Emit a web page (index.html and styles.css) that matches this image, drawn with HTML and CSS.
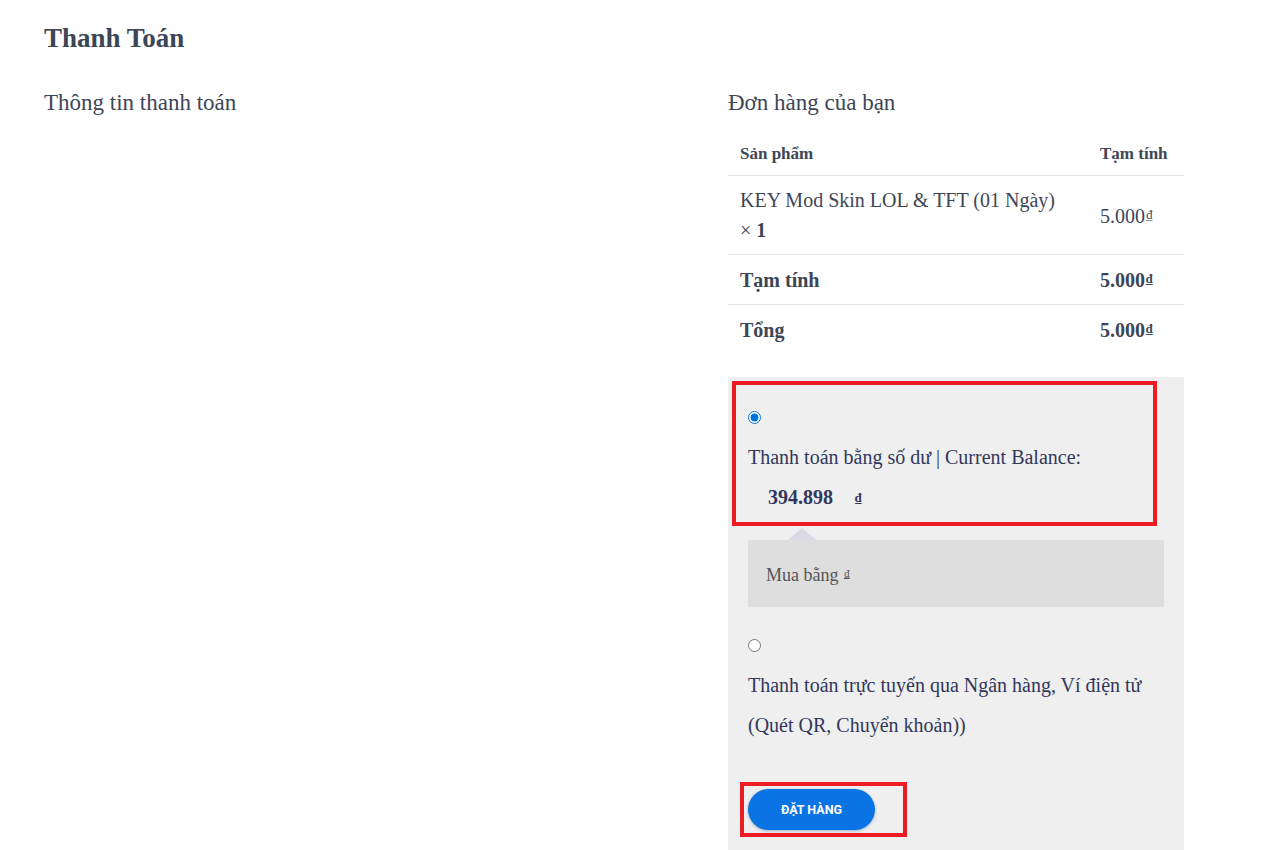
FILE: index.html
```html
<!DOCTYPE html>
<html lang="vi">
<head>
  <meta charset="UTF-8">
  <meta name="viewport" content="width=device-width, initial-scale=1.0">
  <title>Thanh Toán</title>
  <link rel="stylesheet" href="styles.css">
</head>
<body>
  <div class="checkout">
    <h1 class="page-title">Thanh Toán</h1>

    <div class="columns">
      <div class="billing">
        <h3 class="section-title">Thông tin thanh toán</h3>
      </div>

      <div class="order">
        <h3 class="section-title">Đơn hàng của bạn</h3>

        <table class="order-table">
          <thead>
            <tr>
              <th>Sản phẩm</th>
              <th class="col-total">Tạm tính</th>
            </tr>
          </thead>
          <tbody>
            <tr class="item-row">
              <td>KEY Mod Skin LOL &amp; TFT (01 Ngày)<br>× <strong>1</strong></td>
              <td>5.000<span class="dong">₫</span></td>
            </tr>
          </tbody>
          <tfoot>
            <tr>
              <th>Tạm tính</th>
              <td><strong>5.000<span class="dong">₫</span></strong></td>
            </tr>
            <tr>
              <th>Tổng</th>
              <td><strong>5.000<span class="dong">₫</span></strong></td>
            </tr>
          </tfoot>
        </table>

        <div class="payment">
          <ul class="methods">
            <li class="method method-balance">
              <div class="method-radio"><input type="radio" name="pay" checked></div>
              <div class="method-label">Thanh toán bằng số dư | Current Balance:</div>
              <div class="balance"><strong>394.898</strong><span class="balance-dong">₫</span></div>
            </li>
            <li class="method-box">
              Mua bằng <span class="dong">₫</span>
            </li>
            <li class="method method-bank">
              <div class="method-radio"><input type="radio" name="pay"></div>
              <div class="method-label">Thanh toán trực tuyến qua Ngân hàng, Ví điện tử<br>(Quét QR, Chuyển khoản))</div>
            </li>
          </ul>

          <div class="place-order">
            <button class="order-button" type="button">ĐẶT HÀNG</button>
          </div>
        </div>
      </div>
    </div>
  </div>
</body>
</html>
```

FILE: styles.css
```css
/* Checkout page */
body {
  margin: 0;
  padding: 0;
  background-color: #fff;
  font-family: "Liberation Serif", "Times New Roman", serif;
  color: #3d4657;
}

.checkout {
  width: 1140px;
  padding: 0 0 0 44px;
}

.page-title {
  margin: 0;
  padding-top: 22px;
  font-size: 27px;
  line-height: 32px;
  font-weight: bold;
}

.columns {
  display: flex;
  margin-top: 35px;
}

.billing {
  width: 60%;
}

.order {
  width: 40%;
}

.section-title {
  margin: 0;
  font-size: 23px;
  line-height: 28px;
  font-weight: normal;
}

/* order table */
.order-table {
  width: 100%;
  margin-top: 13px;
  border-collapse: collapse;
  font-size: 20px;
}

.order-table th,
.order-table td {
  text-align: left;
  vertical-align: middle;
  padding: 9px 12px;
  line-height: 30px;
}

.order-table thead th {
  font-size: 17px;
  line-height: 22px;
  padding: 13px 12px 10px;
}

.order-table .col-total {
  width: 72px;
}

.order-table tbody tr,
.order-table tfoot tr {
  border-top: 1px solid #e3e3e3;
}

.item-row td {
  padding-top: 9px;
  padding-bottom: 9px;
}

.dong {
  font-size: 13px;
  text-decoration: underline;
  vertical-align: 4px;
  margin-left: 1px;
}

/* payment */
.payment {
  margin-top: 23px;
  background-color: #efefef;
  border-radius: 2px;
  padding: 4px 0 20px;
  color: #32375c;
  font-size: 20px;
}

.methods {
  list-style: none;
  margin: 0;
  padding: 0;
}

.method {
  padding: 0 20px;
}

.method-balance {
  width: 405px;
  margin-left: 4px;
  padding: 12px 0 4px 12px;
  border: 4px solid #ed1c24;
}

.method-radio,
.method-label,
.balance {
  line-height: 40px;
}

.method-radio {
  display: flex;
  align-items: center;
  height: 40px;
}

.method-radio input {
  margin: 0;
  width: 13px;
  height: 13px;
  accent-color: #0075d9;
}

.balance {
  padding-left: 20px;
}

.balance-dong {
  margin-left: 22px;
  font-size: 13px;
  font-weight: bold;
  text-decoration: underline;
  vertical-align: 2px;
}

.method-box {
  position: relative;
  margin: 14px 20px 18px;
  padding: 19px 18px 18px;
  background-color: #dedede;
  border-radius: 2px;
  color: #555;
  font-size: 18px;
  line-height: 28px;
}

.method-box::before {
  content: "";
  position: absolute;
  top: -12px;
  left: 40px;
  border: 14px solid transparent;
  border-top: 0;
  border-bottom: 12px solid #dcd8e4;
}

.method-box .dong {
  font-size: 11px;
}

.place-order {
  display: inline-block;
  margin: 37px 0 0 12px;
  padding: 3px 28px 3px 4px;
  border: 4px solid #ed1c24;
}

.order-button {
  display: block;
  width: 127px;
  height: 41px;
  border: none;
  border-radius: 21px;
  background-color: #0b74e5;
  box-shadow: 0 1px 3px rgba(0, 60, 140, 0.35);
  color: #fff;
  font-family: Roboto, "Liberation Sans", Arial, sans-serif;
  font-size: 12.5px;
  font-weight: bold;
  cursor: pointer;
}
```
